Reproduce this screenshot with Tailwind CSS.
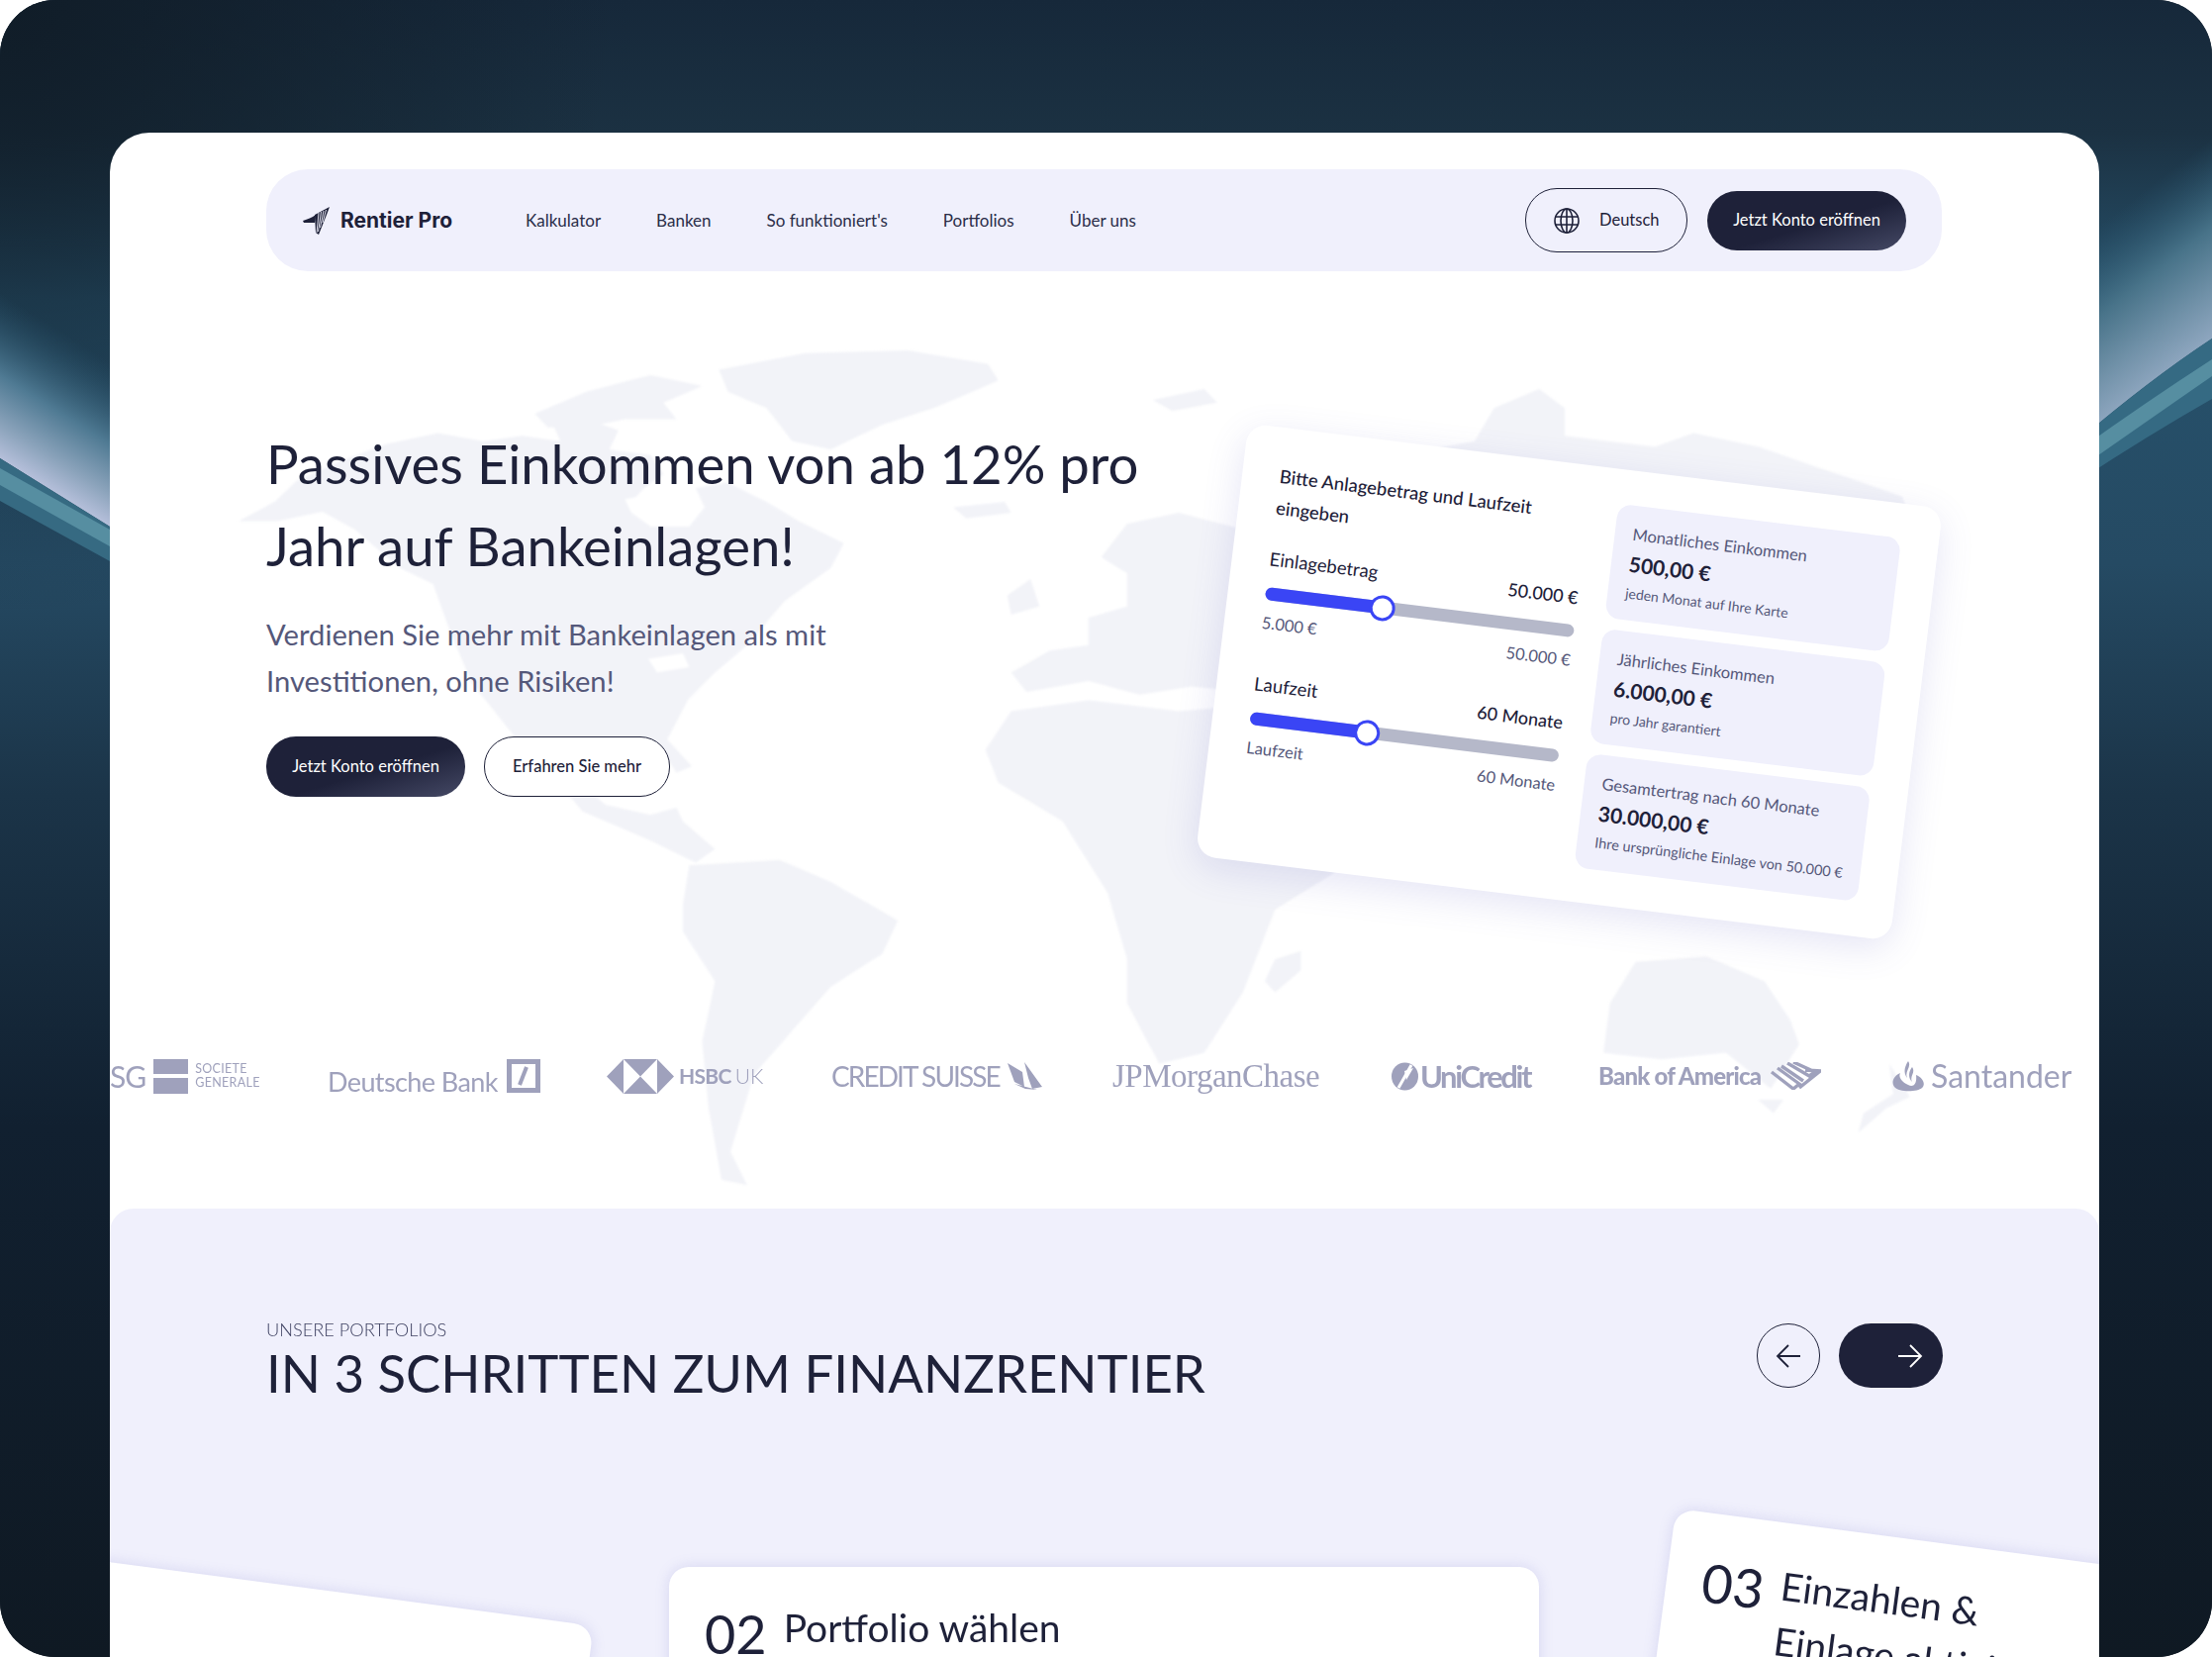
<!doctype html>
<html lang="de">
<head>
<meta charset="utf-8">
<title>Rentier Pro</title>
<script src="https://cdn.jsdelivr.net/npm/@tailwindcss/browser@4"></script>
</head>
<body class="bg-white">
<div class="relative w-[2235px] h-[1674px] overflow-hidden rounded-[56px] bg-[#101a24] pl-[111px] pt-[134px] font-['Lato',sans-serif] text-[#1e2139]">
  <svg class="absolute left-0 top-0" width="2235" height="1674" viewBox="0 0 2235 1674" aria-hidden="true">
    <defs>
      <linearGradient id="base" gradientUnits="userSpaceOnUse" x1="0" y1="0" x2="0" y2="1674">
        <stop offset="0" stop-color="#16283a"/>
        <stop offset="0.08" stop-color="#1b3142"/>
        <stop offset="0.18" stop-color="#27526c"/>
        <stop offset="0.34" stop-color="#254a63"/>
        <stop offset="0.48" stop-color="#1b3448"/>
        <stop offset="0.68" stop-color="#112030"/>
        <stop offset="1" stop-color="#0f1923"/>
      </linearGradient>
      <radialGradient id="corner" gradientUnits="userSpaceOnUse" cx="0" cy="0" r="620">
        <stop offset="0" stop-color="#101c27" stop-opacity="0.95"/>
        <stop offset="1" stop-color="#101c27" stop-opacity="0"/>
      </radialGradient>
      <linearGradient id="streakL" gradientUnits="userSpaceOnUse" x1="55" y1="497" x2="130" y2="377">
        <stop offset="0" stop-color="#b5bfda"/>
        <stop offset="0.2" stop-color="#8ba3bb"/>
        <stop offset="0.5" stop-color="#4f7a93"/>
        <stop offset="1" stop-color="#2a566f" stop-opacity="0"/>
      </linearGradient>
      <linearGradient id="streakR" gradientUnits="userSpaceOnUse" x1="2178" y1="386" x2="2080" y2="260">
        <stop offset="0" stop-color="#8ea6bf"/>
        <stop offset="0.25" stop-color="#6f90a7"/>
        <stop offset="0.55" stop-color="#487389"/>
        <stop offset="1" stop-color="#2a566f" stop-opacity="0"/>
      </linearGradient>
    </defs>
    <rect width="2235" height="1674" fill="url(#base)"/>
    <rect width="700" height="700" fill="url(#corner)"/>
    <path d="M0 150 L180 150 L180 575 L0 463 Z" fill="url(#streakL)"/>
    <path d="M0 463 L111 532 L111 567 L0 506 Z" fill="#366a82"/>
    <path d="M0 473 L111 535 L111 552 L0 490 Z" fill="#568ea1"/>
    <path d="M2100 60 L2235 60 L2235 342 Q2170 385 2100 445 Z" fill="url(#streakR)"/>
    <path d="M2100 445 Q2170 385 2235 342 L2235 403 Q2170 440 2100 486 Z" fill="#356a83"/>
    <path d="M2100 455 Q2170 405 2235 363 L2235 380 Q2170 425 2100 474 Z" fill="#568ea1"/>
  </svg>

  <main class="relative w-[2010px] h-[1540px] overflow-hidden rounded-t-[40px] bg-white blur-[0.6px]">
    <svg class="absolute left-0 top-[206px] blur-[1px]" width="2010" height="860" viewBox="0 0 1545 1545" preserveAspectRatio="none" fill="#f2f3f8" aria-hidden="true">
      <path d="M100 335 L128 300 L145 262 L180 225 L215 195 L255 175 L290 190 L320 180 L350 190 L345 165 L370 150 L395 170 L388 205 L420 215 L430 250 L415 275 L405 300 L420 345 L450 345 L462 310 L455 275 L480 265 L510 300 L535 335 L570 375 L560 420 L524 480 L495 560 L470 610 L449 659 L433 731 L452 780 L440 792 L425 735 L395 740 L368 760 L365 810 L385 850 L420 868 L440 855 L445 880 L470 930 L455 955 L420 915 L367 862 L345 800 L312 719 L281 629 L265 540 L251 449 L225 420 L190 350 L165 318 L130 335 Z"/>
      <path d="M330 140 L370 100 L420 70 L460 90 L430 120 L440 150 L400 150 L370 165 L340 165 Z"/>
      <path d="M473 60 L540 30 L620 25 L682 50 L690 80 L640 130 L600 160 L560 205 L530 190 L510 130 L480 100 Z"/>
      <path d="M450 960 L520 950 L560 990 L612 1060 L600 1120 L560 1180 L530 1260 L500 1340 L482 1480 L495 1540 L475 1530 L465 1400 L460 1280 L470 1170 L445 1080 L445 1030 Z"/>
      <path d="M700 680 L760 660 L830 680 L880 670 L950 720 L960 960 L905 1040 L895 1100 L880 1190 L850 1300 L815 1320 L790 1210 L790 1130 L775 1010 L740 880 L690 810 L680 750 Z"/>
      <path d="M925 1115 L925 1150 L905 1190 L897 1170 L905 1130 Z"/>
      <path d="M712 645 L700 610 L730 570 L760 560 L760 510 L790 490 L790 430 L770 400 L790 340 L830 320 L880 350 L900 250 L960 200 L1000 215 L1060 190 L1075 130 L1110 95 L1130 130 L1130 180 L1200 200 L1230 175 L1280 200 L1392 290 L1400 340 L1350 800 L1000 800 L900 650 L840 635 L800 650 L760 625 Z"/>
      <path d="M697 470 L715 440 L722 490 L700 505 Z"/>
      <path d="M655 310 L695 300 L700 320 L665 330 Z"/>
      <path d="M810 115 L850 95 L860 120 L825 135 Z"/>
      <path d="M1185 1135 L1240 1125 L1285 1170 L1305 1240 L1312 1285 L1290 1365 L1255 1300 L1205 1312 L1160 1300 L1165 1210 Z"/>
      <path d="M1280 1385 L1300 1385 L1292 1410 Z"/>
      <path d="M1382 1320 L1398 1380 L1380 1400 L1358 1445 L1362 1410 L1385 1375 Z"/>
      <path d="M400 295 L440 278 L455 310 L448 345 L420 345 L405 320 Z" fill="#ffffff"/>
      <path d="M418 585 L445 575 L450 600 L425 610 Z" fill="#ffffff"/>
    </svg>

    <div class="relative pr-[159px] pl-[158px] pt-[37px]">
      <nav class="flex h-[103px] items-center rounded-[42px] bg-[#f0f0fc] pl-[36px] pr-[36px]">
        <svg width="30" height="30" viewBox="0 0 30 30" class="mr-[9px] shrink-0" aria-hidden="true">
          <path d="M1 15 C6 13 10 12 14 9 L13 17 L2 17 Z" fill="#1e2139"/>
          <path d="M13 9 L28 1 L25 9 L17 29 L14 27 Z" fill="#1e2139"/>
          <path d="M17 7 L15 27 M19.5 6 L16.5 26 M22 5 L18.5 22 M24.5 4 L21 17" stroke="#f0f0fc" stroke-width="0.9"/>
        </svg>
        <span class="font-['Inter',sans-serif] text-[21px] font-bold whitespace-nowrap">Rentier Pro</span>
        <ul class="ml-[74px] flex gap-[56px] text-[17px] whitespace-nowrap text-[#2a2d48]">
          <li>Kalkulator</li><li>Banken</li><li>So funktioniert's</li><li>Portfolios</li><li>Über uns</li>
        </ul>
        <div class="ml-auto flex h-[65px] w-[164px] items-center rounded-[32px] border border-[#1e2139] pl-[27px]">
          <svg width="28" height="28" viewBox="0 0 28 28" fill="none" stroke="#1e2139" stroke-width="1.6" aria-hidden="true">
            <circle cx="14" cy="14" r="12"/><ellipse cx="14" cy="14" rx="6" ry="12"/><path d="M2.6 10H25.4M2.6 18H25.4M14 2V26"/>
          </svg>
          <span class="ml-[19px] text-[16.5px]">Deutsch</span>
        </div>
        <a class="ml-[20px] flex h-[60px] w-[201px] items-center justify-center rounded-[30px] bg-linear-to-br from-[#1e2139] from-55% to-[#454965] text-[16.5px] text-white">Jetzt Konto eröffnen</a>
      </nav>

      <div class="mt-[153px] flex h-[642px] items-start justify-between pr-[23px]">
        <div>
          <h1 class="text-[54.5px] leading-[83px] font-normal whitespace-nowrap">Passives Einkommen von ab 12% pro<br>Jahr auf Bankeinlagen!</h1>
          <p class="mt-[24px] text-[29.2px] leading-[47px] whitespace-nowrap text-[#55587a]">Verdienen Sie mehr mit Bankeinlagen als mit<br>Investitionen, ohne Risiken!</p>
          <div class="mt-[33px] flex gap-[19px] text-[16.5px]">
            <a class="flex h-[61px] w-[201px] items-center justify-center rounded-[30px] bg-linear-to-br from-[#1e2139] from-55% to-[#454965] text-white">Jetzt Konto eröffnen</a>
            <a class="flex h-[61px] w-[188px] items-center justify-center rounded-[30px] border border-[#1e2139] bg-white font-medium">Erfahren Sie mehr</a>
          </div>
        </div>

        <section class="mt-[42px] flex h-[440px] w-[707px] shrink-0 rotate-[7deg] gap-[29px] rounded-[20px] bg-white pr-[39px] pl-[38px] shadow-[0_10px_36px_rgba(95,95,190,0.16)]">
          <div class="w-[314px] shrink-0 pt-[33px]">
            <h2 class="text-[18.5px] leading-[32px] font-medium whitespace-nowrap">Bitte Anlagebetrag und Laufzeit<br>eingeben</h2>
            <div class="mt-[25px] flex h-[24px] items-center justify-between text-[18.5px]"><span>Einlagebetrag</span><span class="text-[18px] font-medium">50.000 €</span></div>
            <div class="relative mt-[16px] h-[13px] rounded-full bg-[#b5b8c9]">
              <div class="h-full w-[119px] rounded-full bg-[#3a45f5]"></div>
              <div class="absolute left-[106px] top-[-6px] size-[26px] rounded-full border-[3px] border-[#3a45f5] bg-white"></div>
            </div>
            <div class="mt-[13px] flex h-[21px] items-center justify-between text-[16.5px] text-[#55587a]"><span>5.000 €</span><span>50.000 €</span></div>
            <div class="mt-[40px] flex h-[24px] items-center justify-between text-[18.5px]"><span>Laufzeit</span><span class="text-[18px] font-medium">60 Monate</span></div>
            <div class="relative mt-[16px] h-[13px] rounded-full bg-[#b5b8c9]">
              <div class="h-full w-[119px] rounded-full bg-[#3a45f5]"></div>
              <div class="absolute left-[106px] top-[-6px] size-[26px] rounded-full border-[3px] border-[#3a45f5] bg-white"></div>
            </div>
            <div class="mt-[13px] flex h-[21px] items-center justify-between text-[16.5px] text-[#55587a]"><span>Laufzeit</span><span>60 Monate</span></div>
          </div>
          <div class="flex flex-1 flex-col gap-[11px] pt-[35px]">
            <div class="h-[116px] rounded-[14px] bg-[#f0f0fc] px-[18px] pt-[18px] whitespace-nowrap">
              <p class="text-[16.5px] leading-[22px] text-[#55587a]">Monatliches Einkommen</p>
              <p class="mt-[6px] text-[21px] leading-[26px] font-bold">500,00 €</p>
              <p class="mt-[8px] text-[14px] leading-[18px] text-[#55587a]">jeden Monat auf Ihre Karte</p>
            </div>
            <div class="h-[116px] rounded-[14px] bg-[#f0f0fc] px-[18px] pt-[18px] whitespace-nowrap">
              <p class="text-[16.5px] leading-[22px] text-[#55587a]">Jährliches Einkommen</p>
              <p class="mt-[6px] text-[21px] leading-[26px] font-bold">6.000,00 €</p>
              <p class="mt-[8px] text-[14px] leading-[18px] text-[#55587a]">pro Jahr garantiert</p>
            </div>
            <div class="h-[116px] rounded-[14px] bg-[#f0f0fc] px-[18px] pt-[18px] whitespace-nowrap">
              <p class="text-[16.5px] leading-[22px] text-[#55587a]">Gesamtertrag nach 60 Monate</p>
              <p class="mt-[6px] text-[21px] leading-[26px] font-bold">30.000,00 €</p>
              <p class="mt-[8px] text-[14.5px] leading-[18px] text-[#55587a]">Ihre ursprüngliche Einlage von 50.000 €</p>
            </div>
          </div>
        </section>
      </div>
    </div>

    <div class="relative flex h-[36px] items-center whitespace-nowrap text-[#9fa1bc]">
      <div class="flex w-[220px] shrink-0 items-center">
        <span class="text-[30px] leading-none tracking-[-1px]">SG</span>
        <span class="ml-[8px] flex w-[35px] flex-col gap-[4px]"><span class="h-[15px] bg-[#9fa1bc]"></span><span class="h-[16px] bg-[#9fa1bc]"></span></span>
        <span class="ml-[7px] text-[12.5px] leading-[14px] tracking-[0.3px]">SOCIETE<br>GENERALE</span>
      </div>
      <div class="flex w-[282px] shrink-0 items-end">
        <span class="translate-y-[2px] text-[27px] leading-none tracking-[-0.6px]">Deutsche Bank</span>
        <span class="ml-[9px] flex size-[34px] items-center justify-center border-[5px] border-[#9fa1bc]">
          <svg width="24" height="24" viewBox="0 0 24 24" aria-hidden="true"><path d="M15 3 L8 21" stroke="#9fa1bc" stroke-width="4"/></svg>
        </span>
      </div>
      <div class="flex w-[227px] shrink-0 items-center">
        <svg width="68" height="35" viewBox="0 0 68 35" fill="#9fa1bc" aria-hidden="true"><path d="M0 17.5 L17 0 V35 Z M68 17.5 L51 0 V35 Z M17 0 H51 L34 17.5 Z M17 35 H51 L34 17.5 Z"/></svg>
        <span class="ml-[5px] text-[21px] font-bold tracking-[-0.7px]">HSBC</span><span class="ml-[4px] text-[21px] font-light">UK</span>
      </div>
      <div class="flex w-[284px] shrink-0 items-center">
        <span class="text-[28px] leading-none tracking-[-1.9px]">CREDIT SUISSE</span>
        <svg class="ml-[6px]" width="38" height="28" viewBox="0 0 38 28" fill="#9fa1bc" aria-hidden="true"><path d="M2 1 L17 10 L19 25 L9 20 Z M19 0 L37 25 L27 27 L23 16 Z M9 22 L32 28 L20 27 Z"/></svg>
      </div>
      <div class="w-[281px] shrink-0">
        <span class="font-['Liberation_Serif',serif] text-[33px] leading-none tracking-[-0.5px]">JPMorganChase</span>
      </div>
      <div class="flex w-[210px] shrink-0 items-center">
        <svg width="29" height="29" viewBox="0 0 29 29" aria-hidden="true"><ellipse cx="14.5" cy="14.5" rx="13.5" ry="14" fill="#9fa1bc"/><path d="M21 3 L8 26" stroke="#ffffff" stroke-width="3"/><path d="M14 9 L23 6 L16 18" fill="#ffffff"/></svg>
        <span class="ml-[1px] text-[31px] leading-none font-bold tracking-[-2.4px]">UniCredit</span>
      </div>
      <div class="flex w-[297px] shrink-0 items-center">
        <span class="text-[24px] leading-none font-black tracking-[-0.8px]">Bank of America</span>
        <svg class="ml-[9px]" width="52" height="28" viewBox="0 0 52 28" fill="none" stroke="#9fa1bc" stroke-width="3.4" aria-hidden="true"><path d="M2 10 L24 27 L30 22 L8 6 M12 4 L34 19 M18 1 L40 14 L46 10 L24 0 M36 8 L51 9 L30 26"/></svg>
      </div>
      <div class="flex shrink-0 items-center">
        <svg width="33" height="31" viewBox="0 0 33 31" fill="#9fa1bc" aria-hidden="true"><path d="M16 0 C20 6 12 10 15 17 C12 13 11 8 16 0 Z M20 6 C24 12 17 15 20 21 C16 17 16 11 20 6 Z M8 12 C6 16 9 21 16 24 C22 27 25 22 24 14 C31 17 34 23 30 27 C26 31 7 32 2 26 C-2 20 3 14 8 12 Z"/></svg>
        <span class="ml-[6px] text-[32px] leading-none">Santander</span>
      </div>
    </div>

    <section class="relative mt-[116px] h-[454px] overflow-hidden rounded-t-[24px] bg-[#f0f0fc] pt-[112px]">
      <div class="flex items-start justify-between pr-[158px] pl-[158px]">
        <div>
          <p class="text-[18.2px] leading-[20px] font-light text-[#3d4060]">UNSERE PORTFOLIOS</p>
          <h2 class="mt-[4px] text-[52.7px] leading-[60px] whitespace-nowrap">IN 3 SCHRITTEN ZUM FINANZRENTIER</h2>
        </div>
        <div class="mt-[4px] flex gap-[19px]">
          <button class="flex h-[65px] w-[64px] items-center justify-center rounded-full border border-[#1e2139]">
            <svg width="26" height="26" viewBox="0 0 26 26" fill="none" stroke="#1e2139" stroke-width="1.8" aria-hidden="true"><path d="M25 13 H2 M13 2 L2 13 L13 24"/></svg>
          </button>
          <button class="flex h-[65px] w-[105px] items-center justify-end rounded-full bg-[#1e2139] pr-[20px]">
            <svg width="26" height="26" viewBox="0 0 26 26" fill="none" stroke="#ffffff" stroke-width="1.8" aria-hidden="true"><path d="M1 13 H24 M13 2 L24 13 L13 24"/></svg>
          </button>
        </div>
      </div>
      <div class="mt-[166px] ml-[-419px] flex items-start">
        <article class="mr-[105px] h-[500px] w-[879px] shrink-0 rotate-[7.5deg] rounded-[20px] bg-white shadow-[0_0_14px_rgba(120,120,200,0.22)]"></article>
        <article class="mr-[102px] flex h-[500px] w-[879px] shrink-0 items-start gap-[17px] rounded-[20px] bg-white pt-[33px] pl-[36px] shadow-[0_0_14px_rgba(120,120,200,0.22)]">
          <span class="mt-[3px] text-[54px] leading-[64px]">02</span>
          <span class="text-[39px] leading-[56px]">Portfolio wählen</span>
        </article>
        <article class="mt-[-4px] flex h-[500px] w-[879px] shrink-0 rotate-[7.5deg] items-start gap-[17px] rounded-[20px] bg-white pt-[35px] pl-[36px] shadow-[0_0_14px_rgba(120,120,200,0.22)]">
          <span class="mt-[3px] text-[54px] leading-[64px]">03</span>
          <span class="text-[39px] leading-[56px] whitespace-nowrap">Einzahlen &amp;<br>Einlage aktivieren</span>
        </article>
      </div>
    </section>
  </main>
</div>
</body>
</html>
